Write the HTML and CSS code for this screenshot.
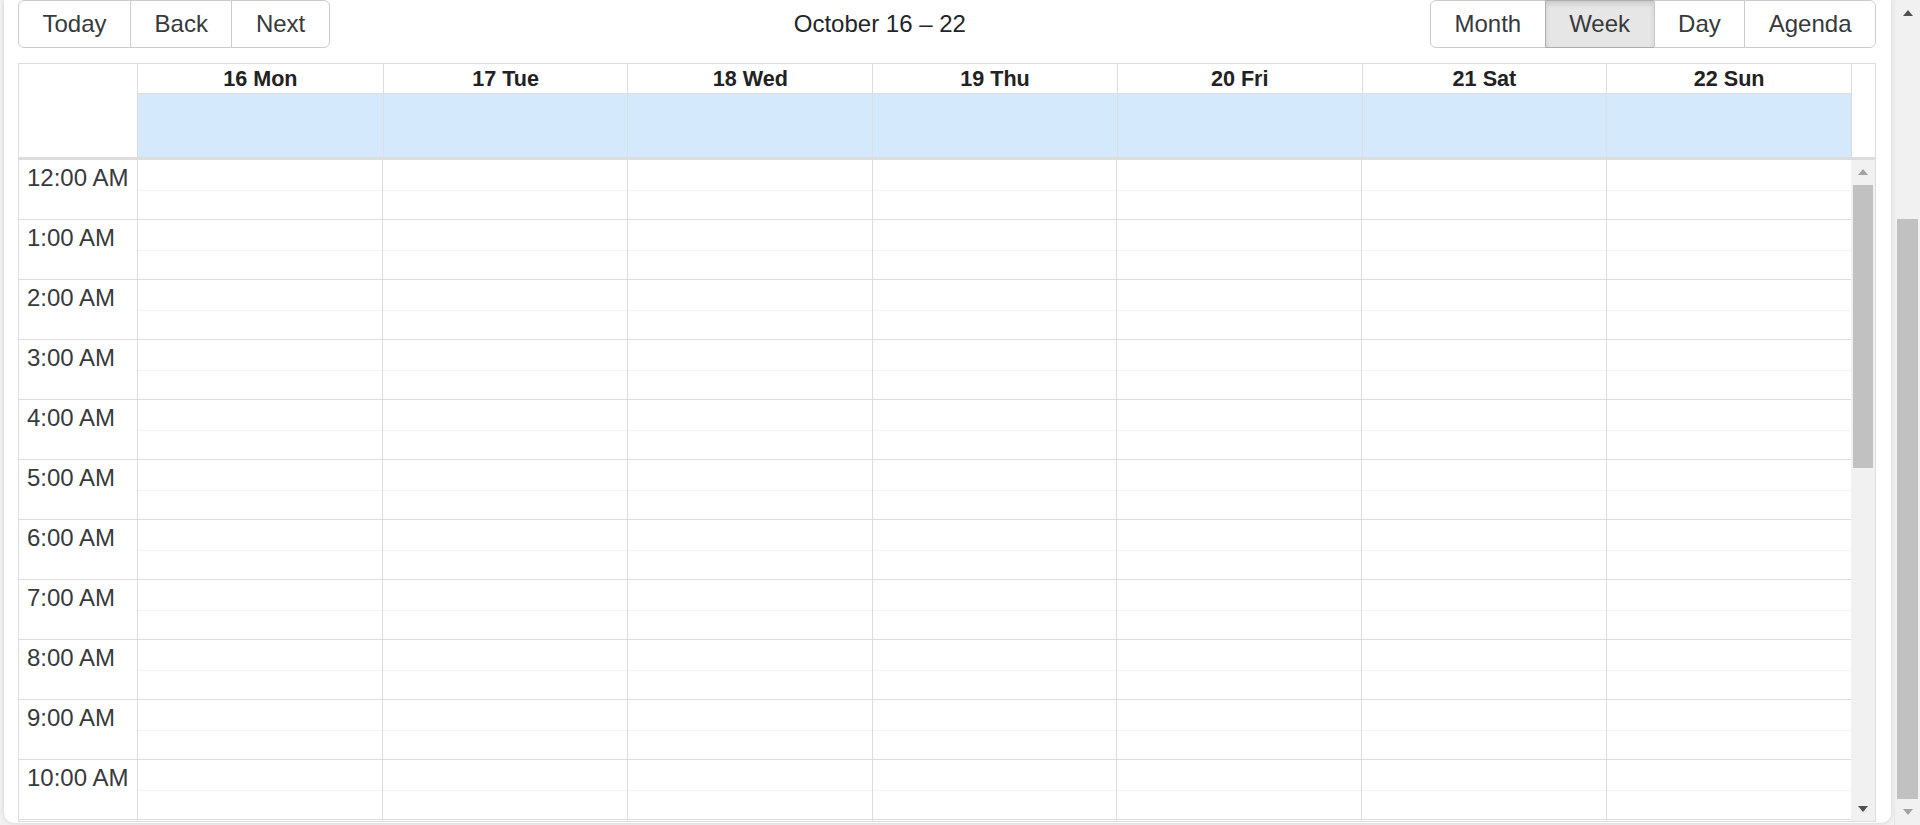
FILE: index.html
```html
<!DOCTYPE html>
<html lang="en">
<head>
<meta charset="utf-8">
<title>Calendar – Week</title>
<link rel="stylesheet" href="styles.css">
</head>
<body>
<div class="viewport">
  <div class="card">
    <div class="toolbar">
      <div class="btn-group">
        <button class="btn" type="button">Today</button><button class="btn" type="button">Back</button><button class="btn" type="button">Next</button>
      </div>
      <div class="toolbar-label">October 16 – 22</div>
      <div class="btn-group">
        <button class="btn" type="button">Month</button><button class="btn active" type="button">Week</button><button class="btn" type="button">Day</button><button class="btn" type="button">Agenda</button>
      </div>
    </div>
    <div class="calendar">
      <div class="time-header">
        <div class="header-gutter"></div>
        <div class="header-content">
          <div class="header-row">
            <div class="day-header">16 Mon</div>
            <div class="day-header">17 Tue</div>
            <div class="day-header">18 Wed</div>
            <div class="day-header">19 Thu</div>
            <div class="day-header">20 Fri</div>
            <div class="day-header">21 Sat</div>
            <div class="day-header">22 Sun</div>
          </div>
          <div class="allday-row">
            <div class="allday-cell"></div>
            <div class="allday-cell"></div>
            <div class="allday-cell"></div>
            <div class="allday-cell"></div>
            <div class="allday-cell"></div>
            <div class="allday-cell"></div>
            <div class="allday-cell"></div>
          </div>
        </div>
        <div class="header-spacer"></div>
      </div>
      <div class="time-content">
        <div class="time-grid">
          <div class="gutter">
            <div class="label-group">12:00 AM</div>
            <div class="label-group">1:00 AM</div>
            <div class="label-group">2:00 AM</div>
            <div class="label-group">3:00 AM</div>
            <div class="label-group">4:00 AM</div>
            <div class="label-group">5:00 AM</div>
            <div class="label-group">6:00 AM</div>
            <div class="label-group">7:00 AM</div>
            <div class="label-group">8:00 AM</div>
            <div class="label-group">9:00 AM</div>
            <div class="label-group">10:00 AM</div>
            <div class="label-group"></div>
          </div>
          <div class="day-col"></div>
          <div class="day-col"></div>
          <div class="day-col"></div>
          <div class="day-col"></div>
          <div class="day-col"></div>
          <div class="day-col"></div>
          <div class="day-col"></div>
        </div>
        <div class="scrollbar inner-scrollbar">
          <div class="sb-btn"><span class="arrow-up disabled"></span></div>
          <div class="sb-thumb inner-thumb"></div>
          <div class="sb-fill"></div>
          <div class="sb-btn"><span class="arrow-down"></span></div>
        </div>
      </div>
    </div>
  </div>
</div>
<div class="scrollbar page-scrollbar">
  <div class="sb-btn page-btn"><span class="arrow-up"></span></div>
  <div class="sb-thumb page-thumb"></div>
  <div class="sb-fill"></div>
  <div class="sb-btn page-btn"><span class="arrow-down disabled"></span></div>
</div>
</body>
</html>
```

FILE: styles.css
```css
html, body {
  height: 100%;
  margin: 0;
}

body {
  display: flex;
  overflow: hidden;
  background: #f2f2f2;
  font-family: "Liberation Sans", Arial, sans-serif;
  font-size: 24px;
  color: #373a3c;
}

.viewport {
  flex: 1;
  min-width: 0;
  display: flex;
  flex-direction: column;
}

.card {
  flex: 1;
  min-height: 0;
  margin: 0 3px 2px 4px;
  padding: 0 15px 1px 14px;
  background: #fff;
  border-radius: 0 0 10px 10px;
  box-shadow: 0 0 5px rgba(0, 0, 0, 0.14);
  display: flex;
  flex-direction: column;
}

/* toolbar */
.toolbar {
  display: flex;
  align-items: center;
  margin-bottom: 15px;
}

.btn-group {
  display: inline-flex;
  flex: none;
}

.btn {
  font: inherit;
  line-height: normal;
  color: #373a3c;
  background: #fff;
  border: 1px solid #ccc;
  padding: 9px 23.5px;
  margin: 0;
  white-space: nowrap;
  border-radius: 0;
}

.btn + .btn {
  margin-left: -1px;
}

.btn:first-child {
  border-radius: 6px 0 0 6px;
}

.btn:last-child {
  border-radius: 0 6px 6px 0;
}

.btn.active {
  background: #e6e6e6;
  border-color: #adadad;
  box-shadow: inset 0 3px 5px rgba(0, 0, 0, 0.125);
}

.toolbar-label {
  flex: 1;
  text-align: center;
  padding: 0 15px;
  color: #212529;
}

/* calendar */
.calendar {
  flex: 1;
  min-height: 0;
  border: 1px solid #ddd;
  display: flex;
  flex-direction: column;
}

.time-header {
  display: flex;
  flex: none;
}

.header-gutter {
  width: 118px;
  flex: none;
}

.header-content {
  flex: 1;
  border-left: 1px solid #ddd;
  display: flex;
  flex-direction: column;
}

.header-row,
.allday-row {
  display: grid;
  grid-template-columns: repeat(7, 1fr);
}

.day-header {
  height: 28px;
  padding-top: 1px;
  border-bottom: 1px solid #ddd;
  display: flex;
  align-items: center;
  justify-content: center;
  font-weight: bold;
  font-size: 21.6px;
  color: #222;
  white-space: nowrap;
}

.day-header + .day-header {
  border-left: 1px solid #ddd;
}

.allday-cell {
  height: 63px;
  background: #d5e9fc;
}

.allday-cell + .allday-cell {
  border-left: 1px solid #dadfe3;
}

.header-spacer {
  width: 23px;
  flex: none;
  border-left: 1px solid #ddd;
}

.time-content {
  flex: 1;
  min-height: 0;
  border-top: 3px solid #ddd;
  display: flex;
}

.time-grid {
  flex: 1;
  min-width: 0;
  display: flex;
  overflow: hidden;
}

.gutter {
  width: 118px;
  flex: none;
}

.label-group {
  height: 55px;
  padding: 4px 7px 0 8px;
  border-bottom: 1px solid #ddd;
  white-space: nowrap;
  color: #373a3c;
}

.day-col {
  flex: 1;
  border-left: 1px solid #ddd;
  background: repeating-linear-gradient(
    to bottom,
    #fff 0,
    #fff 30px,
    #f3f3f3 30px,
    #f3f3f3 31px,
    #fff 31px,
    #fff 59px,
    #ddd 59px,
    #ddd 60px
  );
}

/* scrollbars */
.scrollbar {
  flex: none;
  display: flex;
  flex-direction: column;
  background: #f1f1f1;
}

.inner-scrollbar {
  width: 24px;
}

.page-scrollbar {
  width: 25px;
  border-left: 1px solid #e6e6e6;
}

.sb-btn {
  height: 24px;
  flex: none;
  display: flex;
  align-items: center;
  justify-content: center;
}

.page-btn {
  height: 26px;
}

.sb-fill {
  flex: 1;
}

.sb-thumb {
  flex: none;
  background: #c1c1c1;
}

.inner-thumb {
  margin: 1px 2px 0 2px;
  height: 283px;
}

.page-thumb {
  margin: 193px 2px 0 2px;
  height: 580px;
}

.arrow-up,
.arrow-down {
  width: 0;
  height: 0;
  border-left: 5.5px solid transparent;
  border-right: 5.5px solid transparent;
}

.arrow-up {
  border-bottom: 6px solid #505050;
}

.arrow-down {
  border-top: 6px solid #505050;
}

.arrow-up.disabled {
  border-bottom-color: #a3a3a3;
}

.arrow-down.disabled {
  border-top-color: #a3a3a3;
}
```
